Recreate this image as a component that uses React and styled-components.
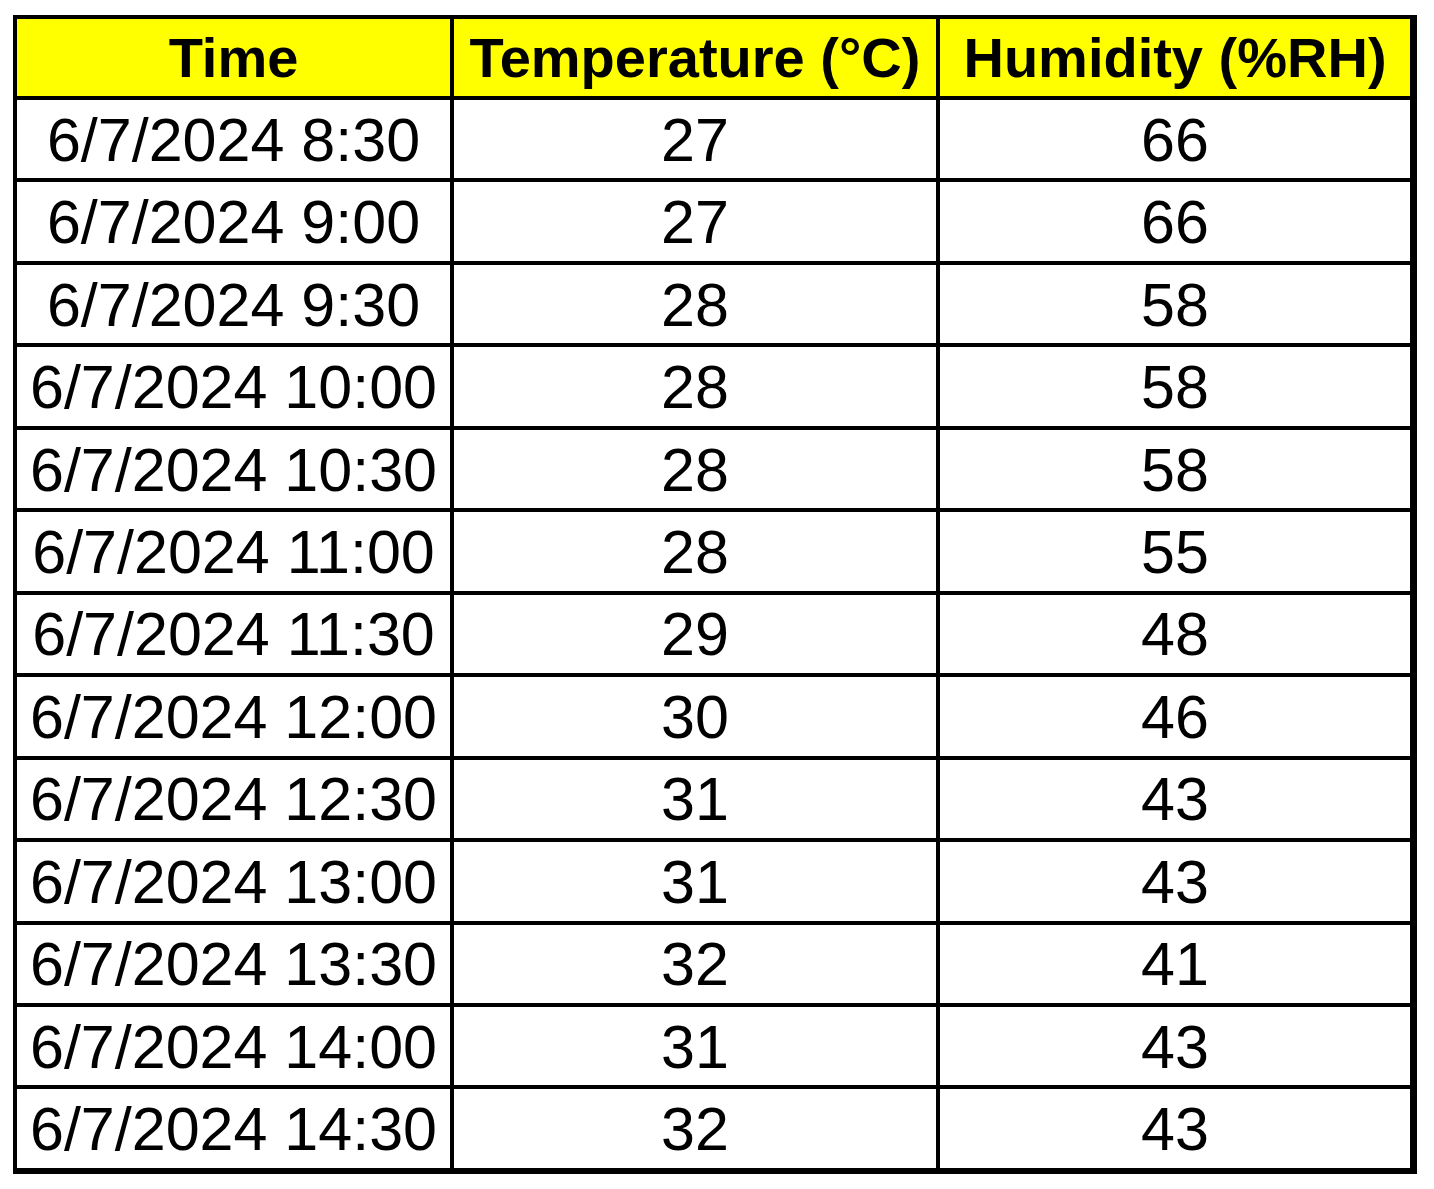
import React from 'react';
import styled, {createGlobalStyle} from 'styled-components'

const GlobalStyle = createGlobalStyle`
  body {
    margin: 0;
    background: #ffffff;
    font-family: 'Liberation Sans', Arial, sans-serif;
  }
`

const rows = [
  ['6/7/2024 8:30', 27, 66],
  ['6/7/2024 9:00', 27, 66],
  ['6/7/2024 9:30', 28, 58],
  ['6/7/2024 10:00', 28, 58],
  ['6/7/2024 10:30', 28, 58],
  ['6/7/2024 11:00', 28, 55],
  ['6/7/2024 11:30', 29, 48],
  ['6/7/2024 12:00', 30, 46],
  ['6/7/2024 12:30', 31, 43],
  ['6/7/2024 13:00', 31, 43],
  ['6/7/2024 13:30', 32, 41],
  ['6/7/2024 14:00', 31, 43],
  ['6/7/2024 14:30', 32, 43],
]

const App = () => {
  return (
    <Page>
      <GlobalStyle />
      <Sheet>
        <HeadCell>Time</HeadCell>
        <HeadCell>Temperature (°C)</HeadCell>
        <HeadCell>Humidity (%RH)</HeadCell>
        {rows.map((r) => (
          <React.Fragment key={r[0]}>
            <Cell>{r[0]}</Cell>
            <Cell>{r[1]}</Cell>
            <Cell>{r[2]}</Cell>
          </React.Fragment>
        ))}
      </Sheet>
    </Page>
  )
}

const Page = styled.div`
  padding: 15px 0 0 13px;
`

const Sheet = styled.div`
  display: grid;
  width: max-content;
  grid-template-columns: 433px 482px 470px;
  grid-template-rows: 77px repeat(13, 78.46px);
  gap: 4px;
  background: #000000;
  padding: 4px 7px 6px 4px;
`

const Cell = styled.div`
  display: flex;
  align-items: center;
  justify-content: center;
  padding-top: 2px;
  background: #ffffff;
  color: #000000;
  font-size: 61px;
  line-height: 1;
  white-space: nowrap;
`

const HeadCell = styled(Cell)`
  padding-top: 0;
  background: #ffff00;
  font-weight: bold;
  font-size: 56px;
`

export default App
